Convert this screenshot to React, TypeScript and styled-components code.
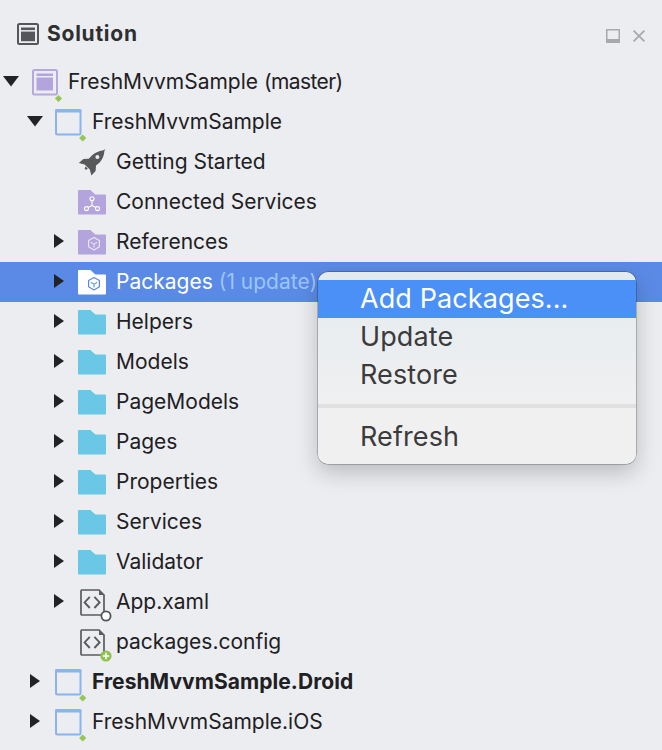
import React from "react";
import styled, { createGlobalStyle } from "styled-components";

const Global = createGlobalStyle`
  html, body { margin: 0; padding: 0; background: #ebedf0; }
  #root { width: 662px; height: 750px; overflow: hidden; }
`;

const Pad = styled.div`
  position: relative;
  width: 662px;
  height: 750px;
  background: #ebedf0;
  font-family: "Inter", "Liberation Sans", sans-serif;
  color: #1f2023;
`;

const Header = styled.header`
  height: 62px;
  display: flex;
  align-items: center;
  padding: 5px 17px 0 17px;
  box-sizing: border-box;
`;

const Title = styled.h1`
  margin: 0 0 0 8px;
  font-size: 21px;
  font-weight: 700;
  letter-spacing: 0.75px;
  color: #2e2f31;
  flex: 1;
`;

const HeaderTools = styled.div`
  display: flex;
  gap: 13px;
  align-items: center;
  margin-top: 4px;
`;

const Tree = styled.div`
  display: flex;
  flex-direction: column;
`;

const Row = styled.div<{ $depth: number; $selected?: boolean }>`
  height: 40px;
  display: flex;
  align-items: center;
  padding-left: ${(p) => p.$depth * 24}px;
  background: ${(p) => (p.$selected ? "#5b8ae6" : "transparent")};
  color: ${(p) => (p.$selected ? "#ffffff" : "#1f2023")};
`;

const ArrowSlot = styled.span`
  width: 32px;
  height: 40px;
  flex: none;
  display: block;
`;

const IconSlot = styled.span`
  width: 36px;
  height: 40px;
  flex: none;
  display: block;
`;

const Label = styled.span<{ $bold?: boolean }>`
  font-size: 21px;
  line-height: 40px;
  white-space: nowrap;
  font-weight: ${(p) => (p.$bold ? 700 : 400)};
  letter-spacing: ${(p) => (p.$bold ? "0.06px" : "0")};
`;

const Branch = styled.span`
  letter-spacing: -0.6px;
`;

const Note = styled.span`
  color: #9ac5f8;
  margin-left: 6px;
`;

const Svg = styled.svg`
  display: block;
  overflow: visible;
`;

const Menu = styled.div`
  position: absolute;
  left: 318px;
  top: 272px;
  width: 318px;
  height: 192px;
  box-sizing: border-box;
  padding: 8px 0;
  border-radius: 10px;
  background: linear-gradient(180deg, #e2eaef 0%, #e9edf0 30%, #f0f0f1 70%, #f0f0f1 100%);
  box-shadow: 0 0 0 0.5px rgba(0, 0, 0, 0.42), 0 8px 22px rgba(0, 0, 0, 0.22);
`;

const MenuItem = styled.div<{ $active?: boolean }>`
  height: 38px;
  line-height: 38px;
  padding-left: 42px;
  font-size: 27px;
  letter-spacing: 0.1px;
  white-space: nowrap;
  color: ${(p) => (p.$active ? "#ffffff" : "#3b3b3b")};
  background: ${(p) => (p.$active ? "#4a90f6" : "transparent")};
`;

const MenuSeparator = styled.div`
  height: 4px;
  background: #e0e0e0;
  margin: 10px 0 10px;
`;

const box = "-4 1 40 40";

const Icon = ({ children }: { children: React.ReactNode }) => (
  <IconSlot>
    <Svg width="40" height="40" viewBox={box} style={{ marginLeft: -4 }}>
      {children}
    </Svg>
  </IconSlot>
);

const ArrowRight = () => (
  <ArrowSlot>
    <Svg width="32" height="40" viewBox="0 1 32 40">
      <path d="M6 13 L16 20 L6 27 Z" fill="#222326" />
    </Svg>
  </ArrowSlot>
);

const ArrowDown = () => (
  <ArrowSlot>
    <Svg width="32" height="40" viewBox="0 1 32 40">
      <path d="M3 15 H19 L11 25.5 Z" fill="#222326" />
    </Svg>
  </ArrowSlot>
);

const Diamond = ({ x, y }: { x: number; y: number }) => (
  <path d={`M${x} ${y - 3.6} L${x + 3.6} ${y} L${x} ${y + 3.6} L${x - 3.6} ${y} Z`} fill="#93c652" />
);

const SolutionIcon = () => (
  <Icon>
    <rect x="1" y="9" width="24" height="24.5" rx="1.5" fill="none" stroke="#b6a8de" strokeWidth="2" />
    <rect x="4.5" y="12.5" width="16.5" height="2.5" fill="#b3a4dd" />
    <rect x="4.5" y="16.5" width="16.5" height="13" fill="#b3a4dd" />
    <Diamond x={26.5} y={37.5} />
  </Icon>
);

const ProjectIcon = () => (
  <Icon>
    <rect x="0" y="9" width="24.5" height="24.5" rx="1.5" fill="none" stroke="#8ab4ec" strokeWidth="2" />
    <rect x="-1" y="8" width="26.5" height="3.5" rx="1.5" fill="#8ab4ec" />
    <Diamond x={26.7} y={37} />
  </Icon>
);

const RocketIcon = () => (
  <Icon>
    <path
      d="M25.4 8 L23.4 9.2 C18.6 10 14.6 11.6 11.4 15 L8.8 17.8 L3.4 18 L-1.2 22 L4.6 23.4 L9.8 28.6 L11.4 34.4 L15.6 30 L16 24.6 L19.4 21.8 C22.4 18.8 24 14.8 24.4 10 Z"
      fill="#58595b"
    />
    <path d="M5.6 25.4 L7.8 27.6 L6 29 L4.6 27.6 Z" fill="#58595b" />
    <circle cx="17.4" cy="16" r="2" fill="#ebedf0" />
  </Icon>
);

const folderPath =
  "M-2 10 a1 1 0 0 1 1-1 H10.4 L15.4 13.6 H25 a1 1 0 0 1 1 1 V32.4 a1 1 0 0 1-1 1 H-1 a1 1 0 0 1-1-1 Z";

const Folder = ({ fill = "#6bc7e6", children }: { fill?: string; children?: React.ReactNode }) => (
  <Icon>
    <path d={folderPath} fill={fill} />
    {children}
  </Icon>
);

const ServicesFolder = () => (
  <Folder fill="#b3a4dd">
    <g fill="none" stroke="#ffffff" strokeWidth="1.1">
      <circle cx="12" cy="17.8" r="2" />
      <circle cx="6.5" cy="27.6" r="2" />
      <circle cx="17.5" cy="27.6" r="2" />
      <path d="M12 19.8 V24.4 M12 24.4 L8.2 26.6 M12 24.4 L15.8 26.6" />
    </g>
  </Folder>
);

const Cube = ({ color }: { color: string }) => (
  <g fill="none" stroke={color} strokeWidth="1.2" strokeLinejoin="round">
    <path d="M14 16.5 L19.4 19.6 V25.8 L14 28.9 L8.6 25.8 V19.6 Z" />
    <path d="M10.8 21.2 L14 23.2 L17.2 21.2 M14 23.2 V26.4" opacity="0.85" />
  </g>
);

const PackageFolder = ({ fill, cube }: { fill: string; cube: string }) => (
  <Folder fill={fill}>
    <Cube color={cube} />
  </Folder>
);

const FileIcon = ({ badge }: { badge: "dot" | "add" }) => (
  <Icon>
    <path
      d="M1 9 H19 L24 14 V33 a1 1 0 0 1-1 1 H2 a1 1 0 0 1-1-1 V10 a1 1 0 0 1 1-1 Z"
      fill="none"
      stroke="#5a5b5d"
      strokeWidth="1.7"
    />
    <path d="M19 8.5 L24.5 14 H19 Z" fill="#5a5b5d" />
    <path d="M9.8 15.8 L4.6 21.4 L9.8 27 M14.4 15.8 L19.6 21.4 L14.4 27" fill="none" stroke="#5a5b5d" strokeWidth="1.9" />
    {badge === "dot" ? (
      <circle cx="26" cy="35" r="4.6" fill="#ffffff" stroke="#55565a" strokeWidth="1.8" />
    ) : (
      <>
        <circle cx="26" cy="35" r="5.6" fill="#8fc24e" />
        <path d="M26 31.8 V38.2 M22.8 35 H29.2" stroke="#ffffff" strokeWidth="1.6" />
      </>
    )}
  </Icon>
);

const PanelIcon = () => (
  <Svg width="22" height="22" viewBox="0 0 22 22">
    <rect x="1" y="1" width="20" height="20" rx="1.5" fill="none" stroke="#555659" strokeWidth="2" />
    <rect x="4" y="4.5" width="14" height="2.6" fill="#555659" />
    <rect x="4" y="8.6" width="14" height="9.6" fill="#555659" />
  </Svg>
);

const DockIcon = () => (
  <Svg width="14" height="14" viewBox="0 0 14 14">
    <rect x="0.75" y="0.75" width="12.5" height="12.5" fill="none" stroke="#a8a9ab" strokeWidth="1.5" />
    <rect x="0" y="10" width="14" height="4" fill="#a8a9ab" />
  </Svg>
);

const CloseIcon = () => (
  <Svg width="12" height="12" viewBox="0 0 12 12">
    <path d="M0.6 0.6 L11.4 11.4 M11.4 0.6 L0.6 11.4" stroke="#a8a9ab" strokeWidth="1.8" />
  </Svg>
);

const folders = ["Helpers", "Models", "PageModels", "Pages", "Properties", "Services", "Validator"];

export default function App() {
  return (
    <Pad>
      <Global />
      <Header>
        <PanelIcon />
        <Title>Solution</Title>
        <HeaderTools>
          <DockIcon />
          <CloseIcon />
        </HeaderTools>
      </Header>
      <Tree>
        <Row $depth={0}>
          <ArrowDown />
          <SolutionIcon />
          <Label>
            FreshMvvmSample <Branch>(master)</Branch>
          </Label>
        </Row>
        <Row $depth={1}>
          <ArrowDown />
          <ProjectIcon />
          <Label>FreshMvvmSample</Label>
        </Row>
        <Row $depth={2}>
          <ArrowSlot />
          <RocketIcon />
          <Label>Getting Started</Label>
        </Row>
        <Row $depth={2}>
          <ArrowSlot />
          <ServicesFolder />
          <Label>Connected Services</Label>
        </Row>
        <Row $depth={2}>
          <ArrowRight />
          <PackageFolder fill="#b3a4dd" cube="#e9e5f6" />
          <Label>References</Label>
        </Row>
        <Row $depth={2} $selected>
          <ArrowRight />
          <PackageFolder fill="#ffffff" cube="#5b8ae6" />
          <Label>
            Packages<Note>(1 update)</Note>
          </Label>
        </Row>
        {folders.map((name) => (
          <Row $depth={2} key={name}>
            <ArrowRight />
            <Folder />
            <Label>{name}</Label>
          </Row>
        ))}
        <Row $depth={2}>
          <ArrowRight />
          <FileIcon badge="dot" />
          <Label>App.xaml</Label>
        </Row>
        <Row $depth={2}>
          <ArrowSlot />
          <FileIcon badge="add" />
          <Label>packages.config</Label>
        </Row>
        <Row $depth={1}>
          <ArrowRight />
          <ProjectIcon />
          <Label $bold>FreshMvvmSample.Droid</Label>
        </Row>
        <Row $depth={1}>
          <ArrowRight />
          <ProjectIcon />
          <Label>FreshMvvmSample.iOS</Label>
        </Row>
      </Tree>
      <Menu>
        <MenuItem $active>Add Packages...</MenuItem>
        <MenuItem>Update</MenuItem>
        <MenuItem>Restore</MenuItem>
        <MenuSeparator />
        <MenuItem>Refresh</MenuItem>
      </Menu>
    </Pad>
  );
}
